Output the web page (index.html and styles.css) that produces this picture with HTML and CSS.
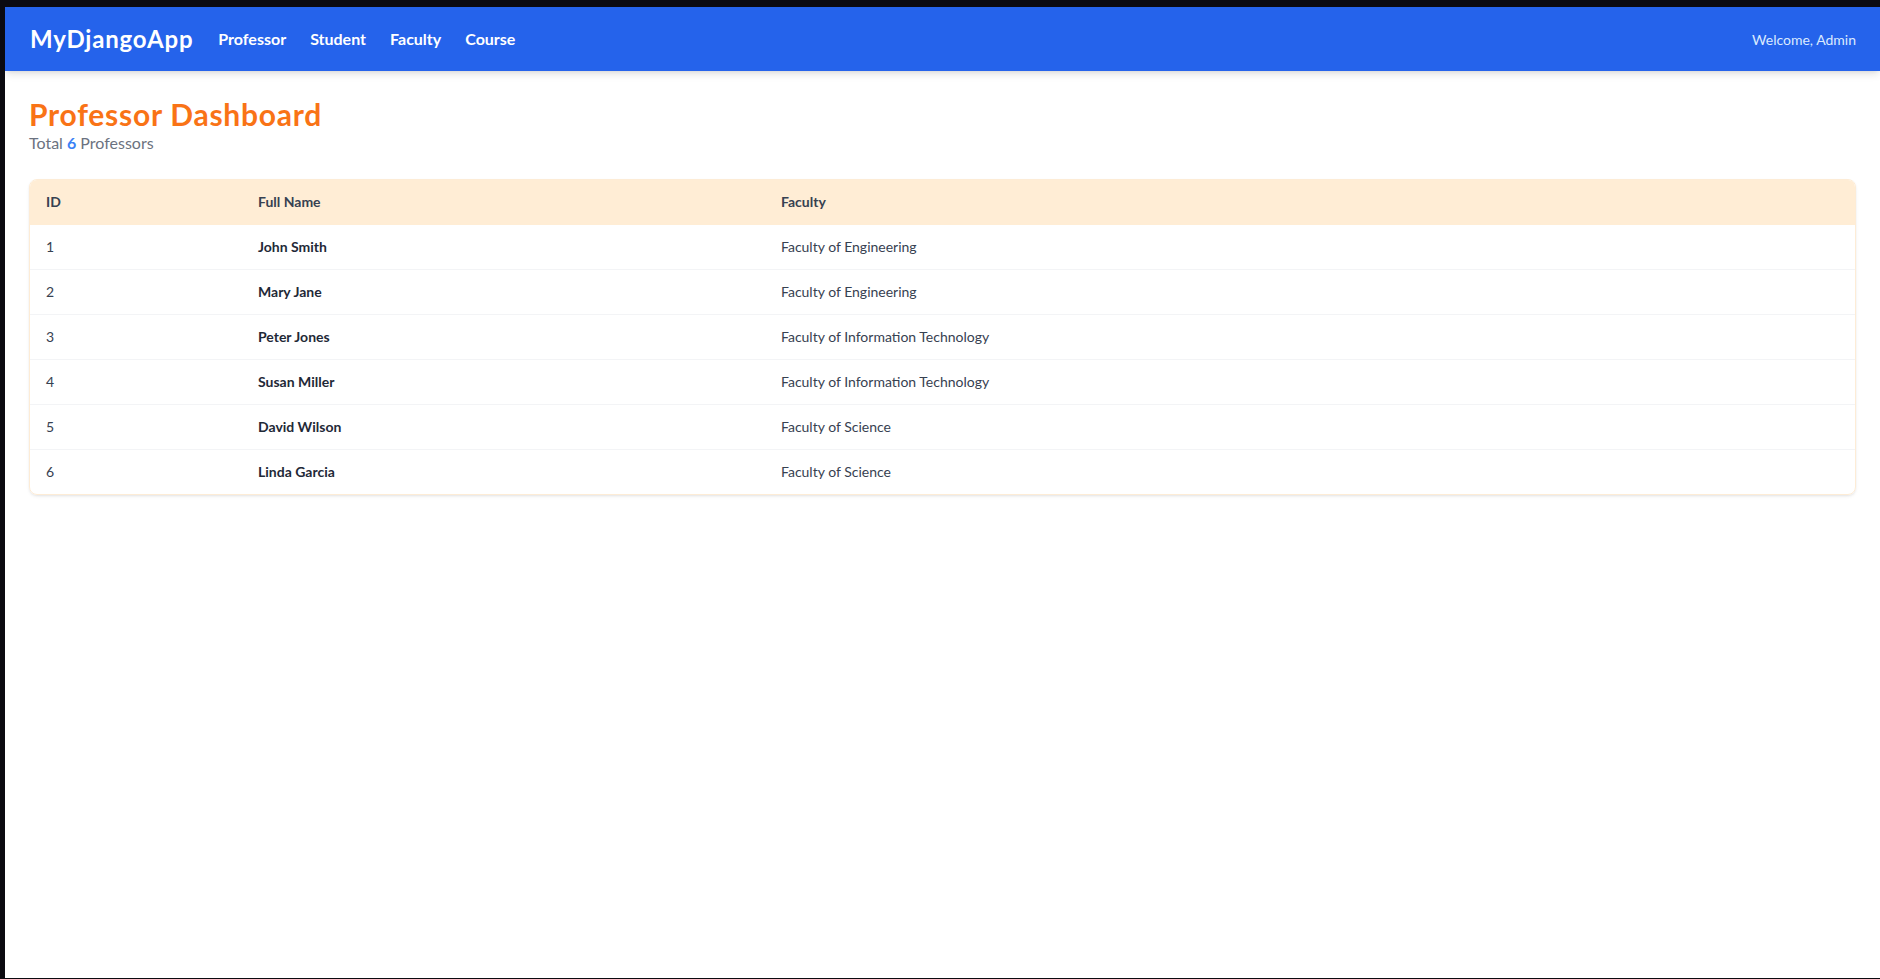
FILE: index.html
```html
<!DOCTYPE html>
<html lang="en">
<head>
<meta charset="utf-8">
<title>Professor Dashboard</title>
<link rel="stylesheet" href="styles.css">
</head>
<body>
<div class="page">
  <nav class="navbar">
    <div class="nav-left">
      <a class="brand" href="#">MyDjangoApp</a>
      <a class="nav-link" href="#">Professor</a>
      <a class="nav-link" href="#">Student</a>
      <a class="nav-link" href="#">Faculty</a>
      <a class="nav-link" href="#">Course</a>
    </div>
    <div class="welcome">Welcome, Admin</div>
  </nav>
  <main class="main">
    <h1 class="title">Professor Dashboard</h1>
    <p class="subtitle">Total <span class="count">6</span> Professors</p>
    <div class="table-card">
      <table class="table">
        <colgroup>
          <col class="col-id">
          <col class="col-name">
          <col class="col-faculty">
        </colgroup>
        <thead>
          <tr><th>ID</th><th>Full Name</th><th>Faculty</th></tr>
        </thead>
        <tbody>
          <tr><td class="id">1</td><td class="name">John Smith</td><td class="faculty">Faculty of Engineering</td></tr>
          <tr><td class="id">2</td><td class="name">Mary Jane</td><td class="faculty">Faculty of Engineering</td></tr>
          <tr><td class="id">3</td><td class="name">Peter Jones</td><td class="faculty">Faculty of Information Technology</td></tr>
          <tr><td class="id">4</td><td class="name">Susan Miller</td><td class="faculty">Faculty of Information Technology</td></tr>
          <tr><td class="id">5</td><td class="name">David Wilson</td><td class="faculty">Faculty of Science</td></tr>
          <tr><td class="id">6</td><td class="name">Linda Garcia</td><td class="faculty">Faculty of Science</td></tr>
        </tbody>
      </table>
    </div>
  </main>
</div>
</body>
</html>
```
FILE: styles.css
```css
* { box-sizing: border-box; }
html, body { height: 100%; }
body {
  margin: 0;
  background: #0b0a10;
  padding: 7px 0 1px 5px;
  font-family: "Lato", "Noto Sans", sans-serif;
  color: #1f2937;
}
.page {
  background: #ffffff;
  height: 100%;
  overflow: hidden;
}
.navbar {
  height: 64px;
  background: #2563eb;
  display: flex;
  align-items: center;
  justify-content: space-between;
  padding: 0 24px 0 24px;
  box-shadow: 0 4px 8px -1px rgba(0,0,0,0.12), 0 2px 4px -2px rgba(0,0,0,0.08);
  position: relative;
  z-index: 1;
}
.nav-left {
  display: flex;
  align-items: center;
  gap: 24px;
}
.brand {
  color: #ffffff;
  text-decoration: none;
  font-size: 24px;
  font-weight: 700;
  line-height: 28px;
  letter-spacing: 0.8px;
  padding-left: 1px;
  margin-right: 1px;
}
.nav-link {
  color: #ffffff;
  text-decoration: none;
  font-size: 16px;
  font-weight: 700;
  line-height: 24px;
}
.welcome {
  color: #dbeafe;
  font-size: 14px;
  line-height: 20px;
  margin-top: 2px;
}
.main {
  padding: 26px 24px 0 24px;
}
.title {
  margin: 0;
  font-size: 30px;
  line-height: 34px;
  font-weight: 700;
  letter-spacing: 0.75px;
  color: #f97316;
}
.subtitle {
  margin: 0 0 24px 0;
  font-size: 16px;
  line-height: 24px;
  color: #6b7280;
}
.count {
  color: #3b82f6;
  font-weight: 700;
}
.table-card {
  border: 1px solid #fdecd6;
  border-radius: 8px;
  overflow: hidden;
  box-shadow: 0 2px 4px -1px rgba(0,0,0,0.08), 0 1px 2px rgba(0,0,0,0.05);
}
.table {
  width: 100%;
  border-collapse: collapse;
  font-size: 14px;
  line-height: 20px;
}
.col-id { width: 212px; }
.col-name { width: 523px; }
.table thead tr {
  background: #ffedd5;
  border-bottom: 1px solid #ffedd5;
}
.table th {
  text-align: left;
  font-weight: 700;
  color: #374151;
  padding: 12px 16px;
}
.table td {
  padding: 12px 16px;
}
.table tbody tr + tr {
  border-top: 1px solid #f3f4f6;
}
.id { color: #374151; }
.name { color: #1f2937; font-weight: 700; }
.faculty { color: #374151; }
```
